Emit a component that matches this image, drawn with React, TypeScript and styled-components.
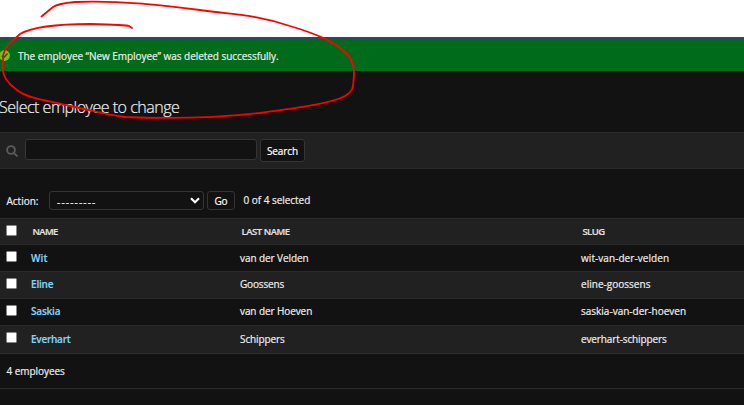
import React from 'react';
import styled, { createGlobalStyle } from 'styled-components';

const GlobalStyle = createGlobalStyle`
  * { box-sizing: border-box; }
  body {
    margin: 0;
    background: #121212;
    overflow: hidden;
  }
`;

const Page = styled.div`
  position: relative;
  width: 744px;
  height: 405px;
  overflow: hidden;
  display: flex;
  flex-direction: column;
  background: #121212;
  color: #eeeeee;
  font: 400 10px/14px 'Open Sans', 'Noto Sans', sans-serif;
  -webkit-text-stroke: 0.2px;
`;

const Blank = styled.div`
  flex: 0 0 39px;
  background: #ffffff;
  border-bottom: 2px solid #2b4a5f;
`;

const Message = styled.div`
  flex: 0 0 32px;
  display: flex;
  align-items: center;
  gap: 8px;
  padding-top: 1px;
  background: #006b1b;
`;

const CheckIcon = styled.svg`
  width: 11px;
  height: 11px;
  margin-left: -1px;
`;

const Text = styled.span<{ $spacing?: number }>`
  white-space: nowrap;
  letter-spacing: ${(p) => p.$spacing ?? 0}px;
`;

const Heading = styled.h1`
  flex: 0 0 61px;
  margin: 0 0 0 -1px;
  padding-top: 25px;
  font-size: 16px;
  line-height: 22px;
  font-weight: 300;
  letter-spacing: -0.49px;
`;

const SearchBar = styled.div`
  flex: 0 0 37px;
  display: flex;
  align-items: flex-start;
  padding: 6px 0 0 6px;
  background: #212121;
  border: solid #2b2b2b;
  border-width: 1px 0;
`;

const SearchIcon = styled.svg`
  width: 12px;
  height: 12px;
  margin: 6px 7px 0 0;
`;

const SearchInput = styled.input`
  width: 232px;
  height: 21px;
  padding: 0 4px;
  color: #eee;
  background: #121212;
  border: 1px solid #353535;
  border-radius: 3px;
`;

const Button = styled.button<{ $width: number; $height: number }>`
  width: ${(p) => p.$width}px;
  height: ${(p) => p.$height}px;
  padding: 1px 0 0;
  color: #ffffff;
  background: #121212;
  border: 1px solid #353535;
  border-radius: 3px;
  font: inherit;
  letter-spacing: -0.1px;
  margin-left: 3px;
`;

const Actions = styled.div`
  flex: 0 0 49px;
  display: flex;
  align-items: flex-start;
  padding: 22px 0 0 6px;
`;

const ActionLabel = styled.label`
  width: 43px;
  padding: 3px 0 0 0.5px;
`;

const Select = styled.div`
  display: flex;
  align-items: center;
  justify-content: space-between;
  width: 155px;
  height: 19px;
  padding: 2px 3px 0 7px;
  background: #121212;
  border: 1px solid #353535;
  border-radius: 3px;
`;

const Chevron = styled.svg`
  width: 10px;
  height: 7px;
  margin-bottom: 2px;
`;

const Counter = styled.span`
  padding-top: 2px;
  margin-left: 8.5px;
  letter-spacing: -0.03px;
`;

const Row = styled.div<{ $alt?: boolean; $height: number; $lift?: number }>`
  flex: 0 0 ${(p) => p.$height}px;
  display: grid;
  grid-template-columns: 31px 209px 341px 1fr;
  align-items: center;
  padding-bottom: ${(p) => p.$lift ?? 0}px;
  background: ${(p) => (p.$alt ? '#212121' : '#121212')};
  border-bottom: 1px solid #2a2a2a;
`;

const HeaderRow = styled(Row)`
  border-top: 1px solid #2a2a2a;
  color: #e0e0e0;
  font-weight: 600;
`;

const HeaderCell = styled.span<{ $spacing: number }>`
  padding-left: 1.5px;
  font-size: 9.5px;
  letter-spacing: ${(p) => p.$spacing}px;
`;

const Checkbox = styled.span<{ $top?: number }>`
  align-self: start;
  width: 11px;
  height: 11px;
  margin: ${(p) => p.$top ?? 6}px 0 0 6px;
  background: #ffffff;
  border: 1px solid #858585;
  border-radius: 1.5px;
`;

const NameLink = styled.a<{ $spacing: number }>`
  color: #81d4fa;
  font-weight: 600;
  letter-spacing: ${(p) => p.$spacing}px;
`;

const Footer = styled.div`
  flex: 0 0 35px;
  padding: 10px 6.5px 0;
  letter-spacing: -0.05px;
  border-bottom: 1px solid #2a2a2a;
`;

const Annotation = styled.svg`
  position: absolute;
  inset: 0;
  pointer-events: none;
`;

const employees = [
  { name: 'Wit', last: 'van der Velden', slug: 'wit-van-der-velden', height: 27, top: 6, lift: 0, nameGap: 0.1, lastGap: -0.08, slugGap: 0.06 },
  { name: 'Eline', last: 'Goossens', slug: 'eline-goossens', height: 27, top: 6, lift: 2, nameGap: -0.2, lastGap: -0.15, slugGap: 0.02 },
  { name: 'Saskia', last: 'van der Hoeven', slug: 'saskia-van-der-hoeven', height: 27, top: 6, lift: 2, nameGap: -0.2, lastGap: -0.09, slugGap: 0 },
  { name: 'Everhart', last: 'Schippers', slug: 'everhart-schippers', height: 28, top: 6, lift: 2, nameGap: -0.25, lastGap: -0.1, slugGap: -0.12 },
];

export default function App() {
  return (
    <Page>
      <GlobalStyle />
      <Blank />
      <Message>
        <CheckIcon viewBox="0 0 11 11">
          <circle cx="5.5" cy="5.5" r="5.4" fill="#70bf2b" />
          <path d="M2.7 5.7 4.7 7.7 8.5 3.6" fill="none" stroke="#006b1b" strokeWidth="1.5" />
        </CheckIcon>
        <Text $spacing={-0.05}>The employee “New Employee” was deleted successfully.</Text>
      </Message>
      <Heading>Select employee to change</Heading>
      <SearchBar>
        <SearchIcon viewBox="0 0 12 12" fill="none" stroke="#5b5b5b" strokeWidth="1.9">
          <circle cx="5" cy="5" r="3.9" />
          <path d="m7.8 7.8 3.1 3.1" strokeLinecap="round" />
        </SearchIcon>
        <SearchInput aria-label="Search employees" />
        <Button $width={45} $height={23}>Search</Button>
      </SearchBar>
      <Actions>
        <ActionLabel>Action:</ActionLabel>
        <Select>
          <Text $spacing={1.17}>---------</Text>
          <Chevron viewBox="0 0 10 7">
            <path d="M1 1.2 5 5.2 9 1.2" fill="none" stroke="#fff" strokeWidth="2.1" />
          </Chevron>
        </Select>
        <Button $width={28} $height={19}>Go</Button>
        <Counter>0 of 4 selected</Counter>
      </Actions>
      <HeaderRow $alt $height={27}>
        <Checkbox />
        <HeaderCell $spacing={-0.65}>NAME</HeaderCell>
        <HeaderCell $spacing={-0.46}>LAST NAME</HeaderCell>
        <HeaderCell $spacing={-0.6}>SLUG</HeaderCell>
      </HeaderRow>
      {employees.map((e, i) => (
        <Row key={e.slug} $alt={i % 2 === 1} $height={e.height} $lift={e.lift}>
          <Checkbox $top={e.top} />
          <NameLink $spacing={e.nameGap}>{e.name}</NameLink>
          <Text $spacing={e.lastGap}>{e.last}</Text>
          <Text $spacing={e.slugGap}>{e.slug}</Text>
        </Row>
      ))}
      <Footer>4 employees</Footer>
      <Annotation width="744" height="405" viewBox="0 0 744 405">
        <path
          d="M41.500 16.500 L53 7 Q58 3.500 75 2 C110 0.500 155 4 200 10 C235 15 253 14 290 26 C320 35 334 42 345 52 Q354 60 354 74 C353 88 354 90 345 96 C330 104 295 108 260 113 C215 118 170 119 125 117 C103 114 95 111 70 106 C45 100 27 98 17 90 Q3 80 3 70 C2.500 56 3 51 8 45 L20 34 C34 26 60 24 90 24 C110 24.500 127 25 129 26 L132 28"
          fill="none"
          stroke="#fe0000"
          strokeWidth="1.8"
          strokeLinecap="round"
          strokeLinejoin="round"
        />
      </Annotation>
    </Page>
  );
}
